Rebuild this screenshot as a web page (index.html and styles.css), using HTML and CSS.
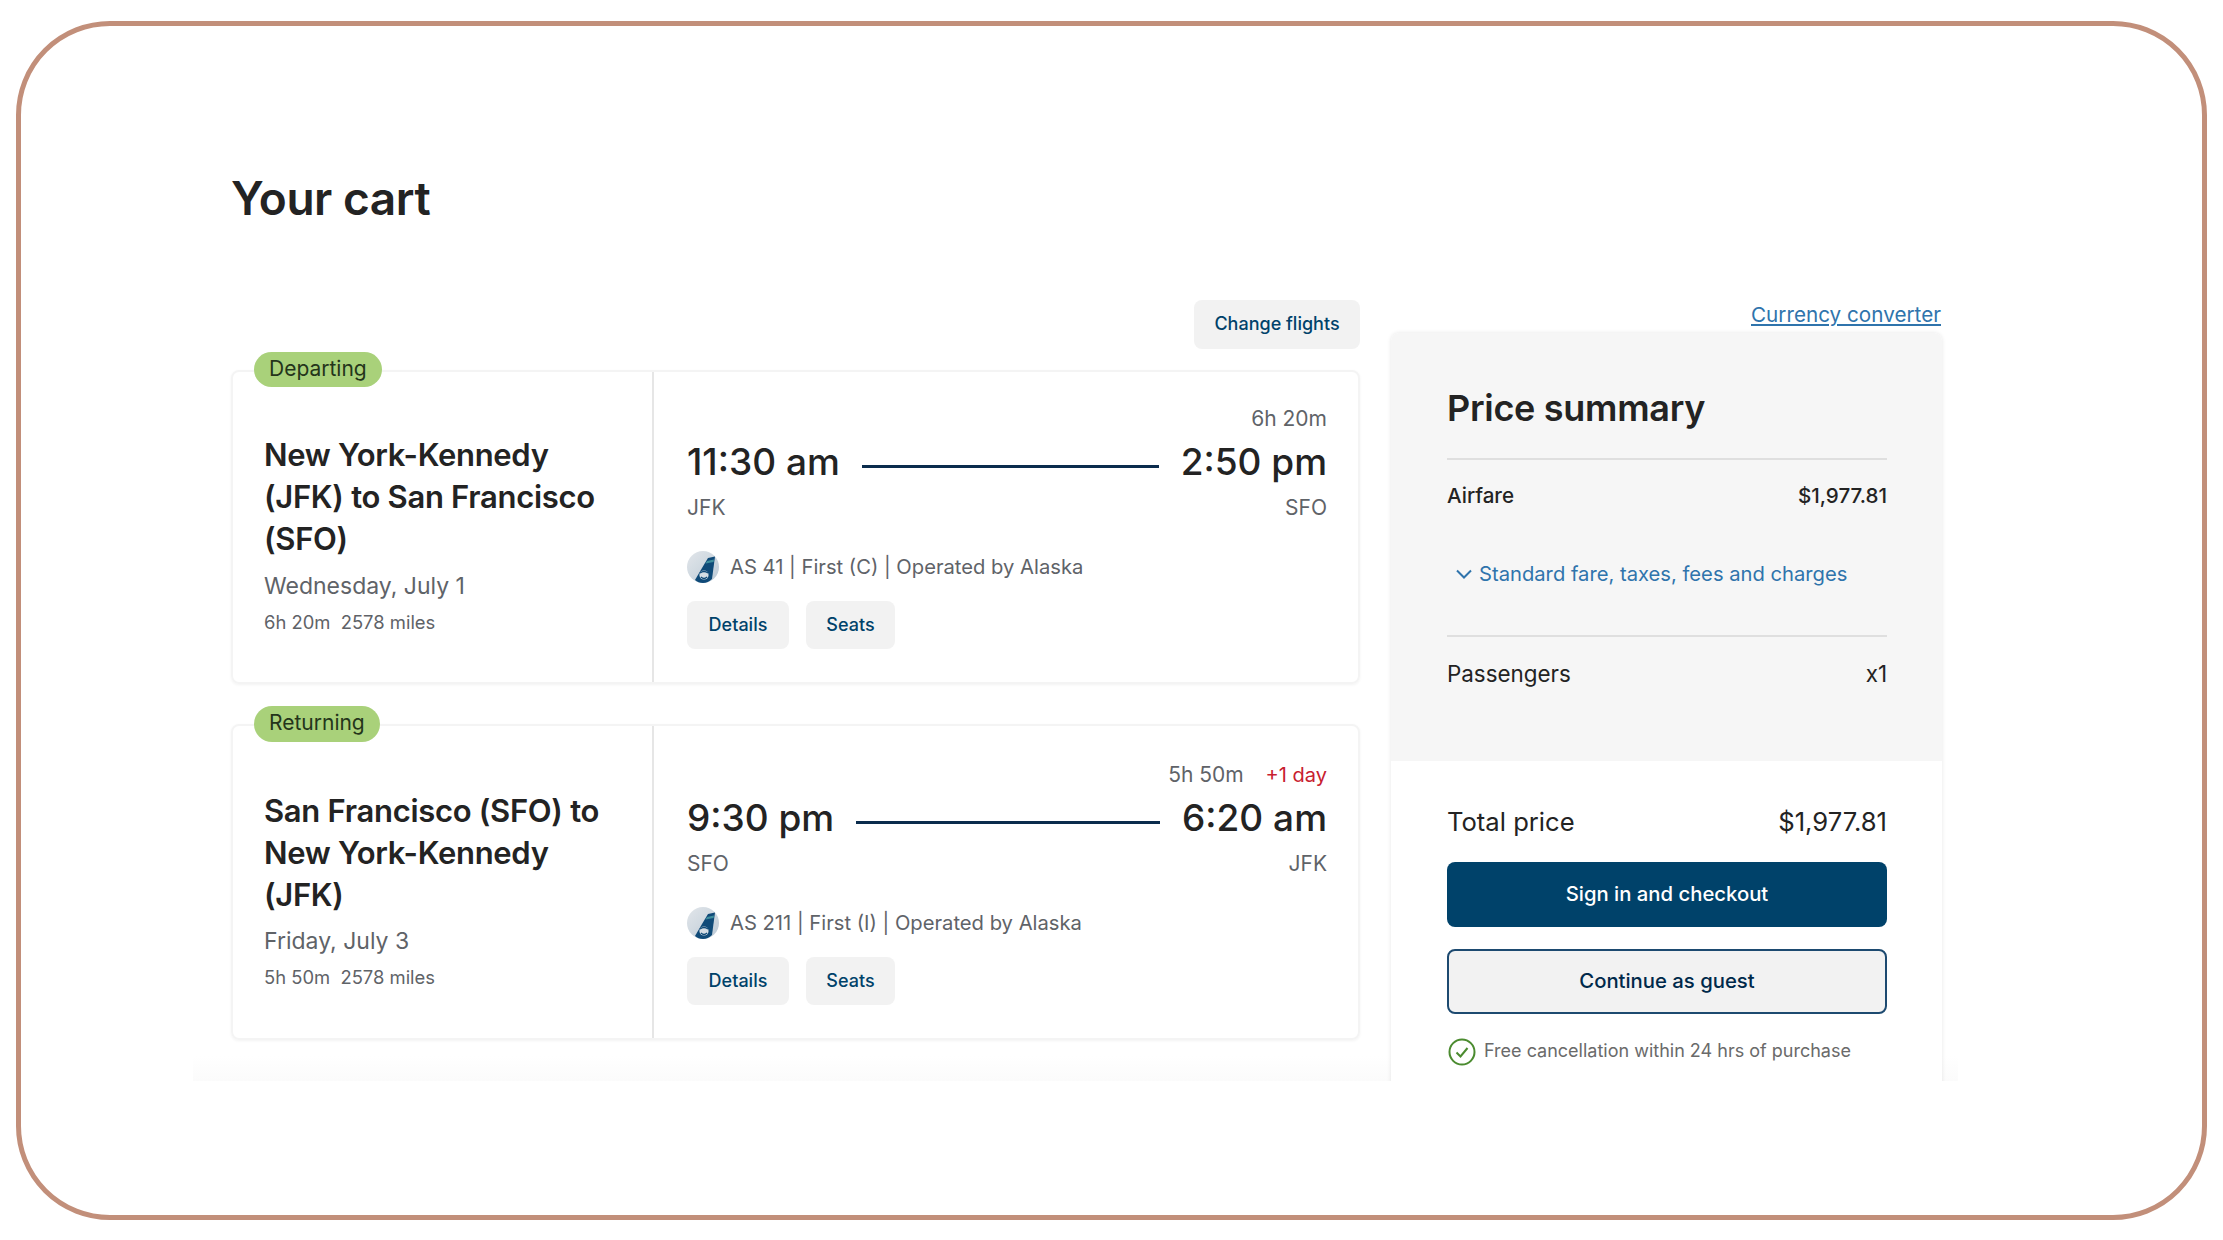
FILE: index.html
```html
<!DOCTYPE html>
<html lang="en">
<head>
    <meta charset="UTF-8">
    <title>Your cart</title>
    <link rel="stylesheet" href="styles.css">
</head>
<body>
    <svg class="icon-defs" width="0" height="0">
        <defs>
            <linearGradient id="logoBg" x1="0" y1="0" x2="1" y2="1">
                <stop offset="0" stop-color="#e2e6ea"/>
                <stop offset="1" stop-color="#bccad6"/>
            </linearGradient>
            <symbol id="airline-logo" viewBox="0 0 32 32">
                <circle cx="16" cy="16" r="16" fill="url(#logoBg)"/>
                <path d="M21 7 L28 5.5 L25 28 Q21 32 16 32 Q11 32 8 29 L15 17 Z" fill="#0f4a78"/>
                <path d="M20 10 L27 8.5 L26.6 11 L18.6 12.6 Z" fill="#3f8f9e"/>
                <circle cx="17" cy="24" r="4.6" fill="#d5dde4"/>
                <path d="M13 22 Q17 19 21 22 M14 26 Q17 29 20 26" fill="none" stroke="#0f4a78" stroke-width="1.3"/>
            </symbol>
        </defs>
    </svg>

    <div class="frame">
        <div class="cart">
            <h1>Your cart</h1>
            <div class="columns">
                <div class="flights">
                    <div class="flights-top">
                        <button class="btn-soft btn-change">Change flights</button>
                    </div>

                    <div class="trip">
                        <span class="badge">Departing</span>
                        <div class="route">
                            <h2>New York-Kennedy (JFK) to San Francisco (SFO)</h2>
                            <p class="date">Wednesday, July 1</p>
                            <p class="meta">6h 20m &nbsp;2578 miles</p>
                        </div>
                        <div class="leg">
                            <div class="duration">6h 20m</div>
                            <div class="times">
                                <span>11:30 am</span>
                                <i class="line"></i>
                                <span>2:50 pm</span>
                            </div>
                            <div class="codes"><span>JFK</span><span>SFO</span></div>
                            <div class="flight-info">
                                <svg class="logo"><use href="#airline-logo"/></svg>
                                <span>AS 41 | First (C) | Operated by Alaska</span>
                            </div>
                            <div class="leg-actions">
                                <button class="btn-soft btn-details">Details</button>
                                <button class="btn-soft btn-seats">Seats</button>
                            </div>
                        </div>
                    </div>

                    <div class="trip trip-return">
                        <span class="badge">Returning</span>
                        <div class="route">
                            <h2>San Francisco (SFO) to New York-Kennedy (JFK)</h2>
                            <p class="date">Friday, July 3</p>
                            <p class="meta">5h 50m &nbsp;2578 miles</p>
                        </div>
                        <div class="leg">
                            <div class="duration">5h 50m <span class="plus-day">+1 day</span></div>
                            <div class="times">
                                <span>9:30 pm</span>
                                <i class="line"></i>
                                <span>6:20 am</span>
                            </div>
                            <div class="codes"><span>SFO</span><span>JFK</span></div>
                            <div class="flight-info">
                                <svg class="logo"><use href="#airline-logo"/></svg>
                                <span>AS 211 | First (I) | Operated by Alaska</span>
                            </div>
                            <div class="leg-actions">
                                <button class="btn-soft btn-details">Details</button>
                                <button class="btn-soft btn-seats">Seats</button>
                            </div>
                        </div>
                    </div>
                </div>

                <div class="summary">
                    <div class="currency"><a href="#">Currency converter</a></div>
                    <div class="summary-box">
                        <div class="summary-grey">
                            <h3>Price summary</h3>
                            <div class="row row-airfare"><span>Airfare</span><span>$1,977.81</span></div>
                            <a class="fare-toggle" href="#">
                                <svg width="18" height="12" viewBox="0 0 18 12"><path d="M2 2.5 L9 9.5 L16 2.5" fill="none" stroke="#2f74ac" stroke-width="2"/></svg>
                                Standard fare, taxes, fees and charges
                            </a>
                            <div class="row row-passengers"><span>Passengers</span><span>x1</span></div>
                        </div>
                        <div class="summary-white">
                            <div class="row row-total"><span>Total price</span><span>$1,977.81</span></div>
                            <button class="btn-primary">Sign in and checkout</button>
                            <button class="btn-guest">Continue as guest</button>
                            <div class="free-cancel">
                                <svg width="28" height="28" viewBox="0 0 28 28"><circle cx="14" cy="14" r="12.5" fill="none" stroke="#4b8b2f" stroke-width="2"/><path d="M8.5 14.5 L12.5 18.5 L19.5 10" fill="none" stroke="#4b8b2f" stroke-width="2"/></svg>
                                <span>Free cancellation within 24 hrs of purchase</span>
                            </div>
                        </div>
                    </div>
                </div>
            </div>
        </div>
    </div>
</body>
</html>
```

FILE: styles.css
```css
body {
    margin: 0;
    background-color: #fff;
    color: #232323;
    font-family: "Inter", "Liberation Sans", sans-serif;
}

h1, h2, h3, p {
    margin: 0;
}

button {
    font-family: inherit;
    cursor: pointer;
}

.icon-defs {
    position: absolute;
}

/* outer rounded frame */
.frame {
    box-sizing: border-box;
    width: 2191px;
    height: 1199px;
    margin: 21px 0 0 16px;
    border: 5px solid #c28f7a;
    border-radius: 94px;
}

/* page area, cut off at the bottom */
.cart {
    box-sizing: border-box;
    width: 1765px;
    height: 1055px;
    margin-left: 172px;
    padding: 142px 16px 0 38px;
    overflow: hidden;
    background: linear-gradient(to bottom, #fff 1030px, #fbfbfb 1055px);
}

h1 {
    font-size: 46px;
    line-height: 60px;
    font-weight: 600;
    letter-spacing: -0.45px;
}

.columns {
    display: flex;
    gap: 31px;
    margin-top: 72px;
}

.flights {
    width: 1129px;
    flex-shrink: 0;
}

.flights-top {
    display: flex;
    justify-content: flex-end;
    margin-bottom: 21px;
}

.btn-soft {
    height: 48px;
    border: none;
    border-radius: 8px;
    background-color: #f2f2f2;
    color: #00426a;
    font-size: 18px;
    font-weight: 500;
    padding: 0 0 2px;
}

.btn-change {
    width: 166px;
    height: 49px;
}

.btn-details {
    width: 102px;
}

.btn-seats {
    width: 89px;
}

.trip {
    position: relative;
    display: flex;
    box-sizing: border-box;
    border: 2px solid #f4f4f4;
    border-radius: 8px;
    box-shadow: 0 1px 3px rgba(0, 0, 0, 0.05);
}

.trip-return {
    margin-top: 40px;
    padding-top: 2px;
}

.badge {
    position: absolute;
    left: 21px;
    top: -20px;
    padding: 0 15px;
    height: 35px;
    line-height: 33px;
    border-radius: 18px;
    background-color: #a9d17a;
    color: #24351a;
    font-size: 21px;
}

.trip-return .badge {
    top: -20px;
    height: 36px;
}

.route {
    box-sizing: border-box;
    width: 421px;
    padding: 62px 40px 0 31px;
    border-right: 2px solid #e6e6e6;
}

.trip-return .route {
    margin-top: -2px;
    padding-top: 64px;
}

.route h2 {
    font-size: 31px;
    line-height: 42px;
    font-weight: 600;
    letter-spacing: -0.3px;
}

.date {
    margin-top: 10px;
    font-size: 23px;
    line-height: 32px;
    color: #5f6368;
}

.trip-return .date {
    margin-top: 9px;
}

.meta {
    margin-top: 7px;
    font-size: 18.4px;
    line-height: 26px;
    color: #5f6368;
}

.leg {
    flex: 1;
    padding: 34px 31px 33px 33px;
}

.duration {
    text-align: right;
    font-size: 21px;
    line-height: 26px;
    color: #5f6368;
}

.plus-day {
    margin-left: 16px;
    font-size: 20px;
    color: #c8202f;
}

.times {
    display: flex;
    align-items: center;
    gap: 22px;
    margin-top: 8px;
    font-size: 37px;
    line-height: 44px;
    font-weight: 500;
}

.line {
    flex: 1;
    height: 3px;
    margin-top: 8px;
    background-color: #0b2c4d;
}

.codes {
    display: flex;
    justify-content: space-between;
    margin-top: 11px;
    font-size: 21px;
    line-height: 26px;
    color: #5f6368;
}

.flight-info {
    display: flex;
    align-items: center;
    gap: 11px;
    margin-top: 30px;
    font-size: 20.2px;
    line-height: 32px;
    color: #5f6368;
}

.logo {
    width: 32px;
    height: 32px;
    flex-shrink: 0;
}

.leg-actions {
    display: flex;
    gap: 17px;
    margin-top: 18px;
}

.summary {
    width: 551px;
    flex-shrink: 0;
}

.currency {
    height: 33px;
    line-height: 30px;
    text-align: right;
    font-size: 20.7px;
    padding-right: 1px;
}

.currency a {
    color: #2f74ac;
}

.summary-box {
    border-radius: 8px 8px 0 0;
    box-shadow: 0 0 4px rgba(0, 0, 0, 0.1);
}

.summary-grey {
    box-sizing: border-box;
    height: 428px;
    padding: 52px 55px 0 56px;
    background-color: #f6f6f6;
    border-radius: 8px 8px 0 0;
}

h3 {
    font-size: 36px;
    line-height: 46px;
    font-weight: 600;
    letter-spacing: -0.3px;
    padding-bottom: 27px;
    border-bottom: 2px solid #dfdfdf;
}

.row {
    display: flex;
    justify-content: space-between;
}

.row-airfare {
    margin-top: 22px;
    font-size: 20.6px;
    line-height: 28px;
    font-weight: 500;
}

.fare-toggle {
    display: flex;
    align-items: center;
    gap: 6px;
    margin-top: 50px;
    padding: 0 0 0 8px;
    font-size: 20.2px;
    line-height: 28px;
    color: #2f74ac;
    text-decoration: none;
}

.row-passengers {
    margin-top: 47px;
    padding-top: 22px;
    border-top: 2px solid #dfdfdf;
    font-size: 22.4px;
    line-height: 30px;
}

.summary-white {
    padding: 44px 55px 40px 56px;
    background-color: #fff;
}

.row-total {
    font-size: 25.6px;
    line-height: 34px;
}

.btn-primary,
.btn-guest {
    display: block;
    width: 100%;
    box-sizing: border-box;
    padding: 0 0 2px;
    border-radius: 8px;
    font-size: 20.3px;
    font-weight: 500;
}

.btn-primary {
    height: 65px;
    margin-top: 23px;
    border: none;
    background-color: #00426a;
    color: #fff;
}

.btn-guest {
    height: 65px;
    margin-top: 22px;
    border: 2px solid #1d4a70;
    background-color: #f2f2f2;
    color: #00294a;
}

.free-cancel {
    display: flex;
    gap: 8px;
    margin-top: 24px;
    padding-left: 1px;
    font-size: 18px;
    line-height: 26px;
    color: #6a6a6a;
}
```
